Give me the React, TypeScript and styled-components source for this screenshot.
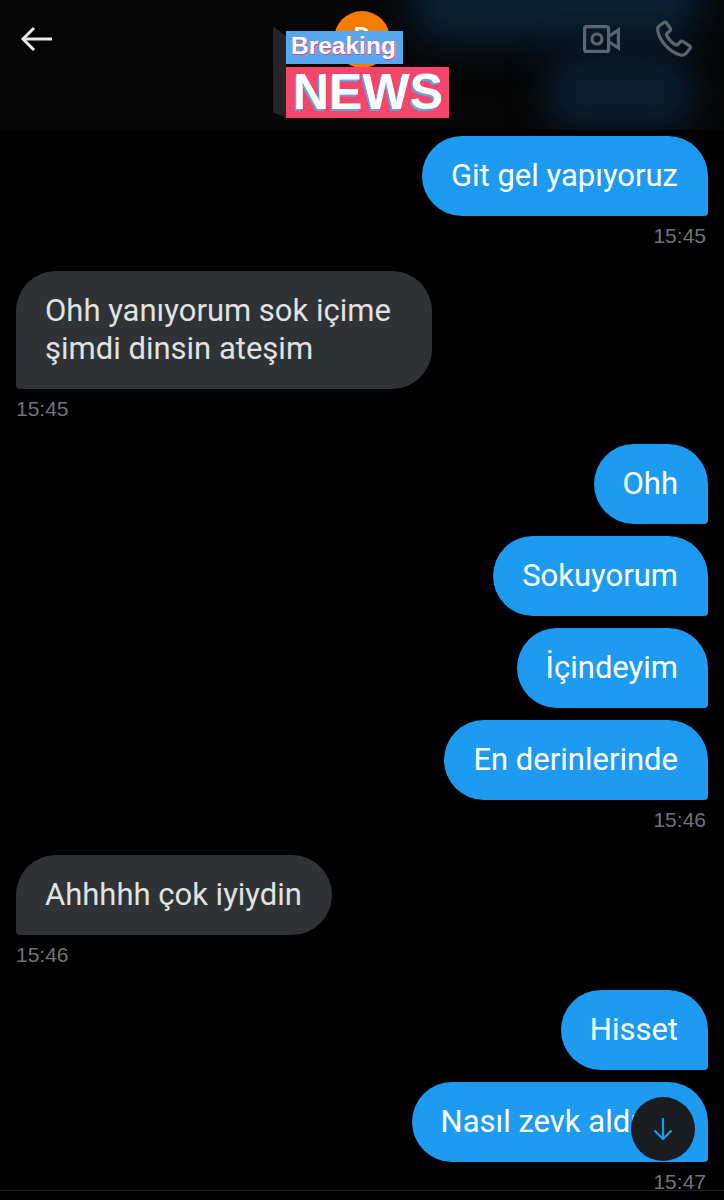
import React from "react";
import styled, { createGlobalStyle } from "styled-components";

const GlobalStyle = createGlobalStyle`
  html, body {
    margin: 0;
    padding: 0;
    background: #000;
  }
  * {
    box-sizing: border-box;
  }
`;

type Side = "me" | "them";

type Message = {
  side: Side;
  texts: string[];
  time: string;
};

const messages: Message[] = [
  { side: "me", texts: ["Git gel yapıyoruz"], time: "15:45" },
  { side: "them", texts: ["Ohh yanıyorum sok içime şimdi dinsin ateşim"], time: "15:45" },
  { side: "me", texts: ["Ohh", "Sokuyorum", "İçindeyim", "En derinlerinde"], time: "15:46" },
  { side: "them", texts: ["Ahhhhh çok iyiydin"], time: "15:46" },
  { side: "me", texts: ["Hisset", "Nasıl zevk aldınız"], time: "15:47" },
];

export default function App() {
  return (
    <>
      <GlobalStyle />
      <StyledPage>
        <StyledHeader>
          <StyledGlowTop />
          <StyledGlowRight />
          <StyledBackButton aria-label="Geri">
            <svg width="32" height="26" viewBox="0 0 32 26" fill="none" stroke="#e7e9ea" strokeWidth="3">
              <path d="M32 13H3" />
              <path d="M14 2L3 13l11 11" />
            </svg>
          </StyledBackButton>
          <StyledActions>
            <svg width="37" height="28" viewBox="0 0 37 28" fill="none" stroke="#5b6670" strokeWidth="3.2">
              <rect x="1.600" y="1.600" width="24" height="24.800" rx="2" />
              <circle cx="14" cy="14" r="5" />
              <path d="M25.600 11.500L35.400 5v18l-9.800-6.500" />
            </svg>
            <svg width="36" height="37" viewBox="0 0 36 37" fill="none" stroke="#5b6670" strokeWidth="3.2" strokeLinejoin="round">
              <path d="M8 2.500L3.500 5.500C2 6.700 1.500 8.500 1.800 10.800 3.500 21 13.500 32 24.500 35c2.300.6 4.200-.1 5.500-1.500l4-5c.6-1 .4-2-.5-2.700l-6.500-4.300c-1-.6-2-.5-2.800.3l-2.500 2.700c-.6.6-1.400.7-2.200.3-3.500-2-6.800-5.300-8.800-9.300-.4-.8-.2-1.600.4-2.200l2.700-2.400c.8-.8 1-1.800.4-2.800L10.500 3c-.6-.9-1.600-1.100-2.500-.5z" />
            </svg>
          </StyledActions>
          <StyledAvatar>
            <StyledAvatarLetter>D</StyledAvatarLetter>
          </StyledAvatar>
          <StyledBadge>
            <StyledBadgeFold />
            <StyledBreaking>Breaking</StyledBreaking>
            <StyledNews>NEWS</StyledNews>
          </StyledBadge>
        </StyledHeader>
        <StyledList>
          {messages.map((group, i) => (
            <StyledGroup key={i} $side={group.side}>
              <StyledBubbles $side={group.side}>
                {group.texts.map((text) => (
                  <StyledBubble key={text} $side={group.side}>
                    {text}
                  </StyledBubble>
                ))}
              </StyledBubbles>
              <StyledTime $side={group.side}>{group.time}</StyledTime>
            </StyledGroup>
          ))}
        </StyledList>
        <StyledScrollButton aria-label="Aşağı">
          <svg width="20" height="24" viewBox="0 0 20 24" fill="none" stroke="#1d9bf0" strokeWidth="2.2">
            <path d="M10 1v21" />
            <path d="M1.500 13.500L10 22l8.500-8.500" />
          </svg>
        </StyledScrollButton>
        <StyledComposerEdge />
      </StyledPage>
    </>
  );
}

const StyledPage = styled.div`
  position: relative;
  width: 724px;
  height: 1200px;
  overflow: hidden;
  background: #000;
  font-family: Roboto, "Liberation Sans", Arial, sans-serif;
`;

const StyledHeader = styled.header`
  position: relative;
  height: 130px;
  display: flex;
  justify-content: space-between;
  align-items: flex-start;
  padding: 26px 32px 0 20px;
  background: #050505;
  overflow: hidden;
`;

const StyledGlowTop = styled.div`
  position: absolute;
  left: 410px;
  top: -30px;
  width: 290px;
  height: 70px;
  border-radius: 30px;
  background: #0a2438;
  filter: blur(22px);
`;

const StyledGlowRight = styled.div`
  position: absolute;
  left: 545px;
  top: 55px;
  width: 150px;
  height: 75px;
  border-radius: 30px;
  background: #0a1f30;
  filter: blur(18px);
`;

const StyledBackButton = styled.div`
  position: relative;
  display: flex;
`;

const StyledActions = styled.div`
  position: relative;
  display: flex;
  align-items: center;
  gap: 36px;
  margin-top: -6px;
`;

const StyledAvatar = styled.div`
  position: absolute;
  left: 334px;
  top: 11px;
  width: 56px;
  height: 57px;
  border-radius: 50%;
  background: #f57c00;
  display: flex;
  justify-content: center;
`;

const StyledAvatarLetter = styled.span`
  color: #fff;
  font-family: "Liberation Sans", Arial, sans-serif;
  font-size: 22px;
  font-weight: 700;
  line-height: 1;
  margin-top: 13px;
`;

const StyledBadge = styled.div`
  position: absolute;
  left: 286px;
  top: 31px;
  display: flex;
  flex-direction: column;
  align-items: flex-start;
  gap: 3px;
  font-family: "Liberation Sans", Arial, sans-serif;
`;

const StyledBadgeFold = styled.div`
  position: absolute;
  left: -13px;
  top: -5px;
  width: 13px;
  height: 92px;
  background: #252325;
  clip-path: polygon(0 0, 100% 10px, 100% 100%, 0 86px);
`;

const StyledBreaking = styled.div`
  width: 117px;
  height: 33px;
  padding-left: 5px;
  background: #58a6ec;
  color: #fff;
  font-size: 24.500px;
  font-weight: 700;
  line-height: 30px;
  white-space: nowrap;
  text-shadow: 1px 1px 0 #f0436a;
`;

const StyledNews = styled.div`
  width: 163px;
  height: 51px;
  padding-left: 7px;
  background: #f4456a;
  color: #fff;
  font-size: 50px;
  font-weight: 700;
  line-height: 51px;
  white-space: nowrap;
  text-shadow: -1.500px 1.500px 0 #58a6ec;
`;

const StyledList = styled.main`
  display: flex;
  flex-direction: column;
  gap: 23px;
  padding: 6px 16px 0;
`;

const StyledGroup = styled.section<{ $side: Side }>`
  display: flex;
  flex-direction: column;
  align-items: ${(props) => (props.$side === "me" ? "flex-end" : "flex-start")};
`;

const StyledBubbles = styled.div<{ $side: Side }>`
  display: flex;
  flex-direction: column;
  align-items: ${(props) => (props.$side === "me" ? "flex-end" : "flex-start")};
  gap: 12px;
`;

const StyledBubble = styled.div<{ $side: Side }>`
  max-width: 416px;
  padding: 21.250px 30px 21.250px 29px;
  font-size: 31px;
  line-height: 37.500px;
  color: ${(props) => (props.$side === "me" ? "#fff" : "#e0e2e3")};
  background: ${(props) => (props.$side === "me" ? "#1d9bf0" : "#2f3336")};
  border-radius: ${(props) => (props.$side === "me" ? "40px 40px 4px 40px" : "40px 40px 40px 4px")};
`;

const StyledTime = styled.div<{ $side: Side }>`
  margin-top: 8px;
  padding-right: ${(props) => (props.$side === "me" ? "2px" : "0")};
  font-family: "Liberation Sans", Arial, sans-serif;
  font-size: 21px;
  line-height: 24px;
  color: #6e767d;
`;

const StyledScrollButton = styled.div`
  position: absolute;
  left: 631px;
  top: 1097px;
  width: 64px;
  height: 64px;
  border-radius: 50%;
  background: #1a1c1f;
  display: flex;
  align-items: center;
  justify-content: center;
`;

const StyledComposerEdge = styled.div`
  position: absolute;
  left: 0;
  right: 0;
  top: 1190px;
  border-top: 1px solid #1c1f22;
`;
